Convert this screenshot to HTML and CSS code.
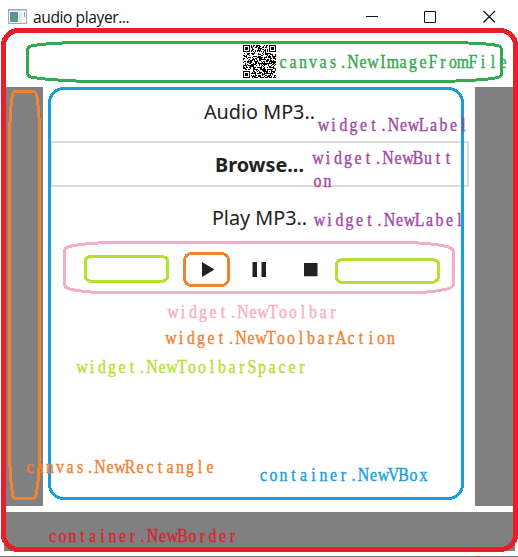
FILE: index.html
```html
<!DOCTYPE html>
<html lang="en">
<head>
<meta charset="utf-8">
<title>audio player...</title>
<link rel="stylesheet" href="styles.css">
</head>
<body>
<div class="window">
  <header class="titlebar">
    <svg class="app-icon" width="19" height="16" viewBox="0 0 19 16">
      <defs><linearGradient id="g" x2="1" y2="1"><stop offset="0" stop-color="#5e8fa8"/><stop offset="1" stop-color="#4fa77c"/></linearGradient></defs>
      <rect x=".5" y=".5" width="18" height="14" fill="#f4f6f8" stroke="#a0a8b0"/>
      <path d="M1 1.5H18" stroke="#c3d0dc"/>
      <rect x="2" y="3" width="8" height="10" fill="url(#g)"/>
      <rect x="11" y="3" width="3" height="10" fill="#e4e8ee"/>
      <path d="M16.500 3V8" stroke="#8aa0b0"/>
    </svg>
    <span class="title">audio player...</span>
    <svg class="controls" width="130" height="14" viewBox="0 0 130 14" fill="none" stroke="#111">
      <path d="M0 6.500H12M58.500 1.500H69.500V12.500H58.500Z"/>
      <path d="M117.500 1L129 12.500M129 1L117.500 12.500" stroke-width="1.200"/>
    </svg>
  </header>
  <div class="top"><svg class="qr" width="33" height="33" viewBox="0 0 33 33" shape-rendering="crispEdges"><path id="qr"/></svg></div>
  <div class="middle">
    <div class="side left"></div>
    <main class="vbox">
      <div class="label first">Audio MP3..</div>
      <div class="button">Browse...</div>
      <div class="label second">Play MP3..</div>
      <div class="toolbar">
        <svg width="117" height="16" viewBox="0 0 117 16" fill="#212121">
          <path d="M0 0L12.500 7.500L0 15ZM50.500 0H55V15H50.500ZM59.500 0H64V15H59.500ZM102 1H115.500V14.200H102Z"/>
        </svg>
      </div>
    </main>
    <div class="side right"></div>
  </div>
  <div class="bottom"></div>
  <div class="edge"></div>
</div>
<svg class="notes" width="518" height="557" viewBox="0 0 518 557">
  <g fill="none" stroke-width="3" shape-rendering="crispEdges">
    <rect x="3.500" y="30.500" width="512" height="519" rx="15" stroke="#e81e28" stroke-width="5"/>
    <path stroke="#32aa50" d="M75 42.500H453Q492 43.500 499 46Q501.500 47 501.500 50V74Q501.500 76.500 498 77.500Q485 80.500 438 81.500H89Q44 80 31 77Q27.500 76 27.500 73V50Q27.500 47 31 46Q43 43.500 75 42.500Z"/>
    <path stroke="#f08232" d="M15 91.500H33Q36 91.500 37 97Q39.500 112 39.500 138V455Q39 480 36 495Q35.500 498.500 32 498.500H16Q13 498.500 12.500 494Q9.500 475 9.500 445V138Q10 112 12 97Q12.500 91.500 15 91.500Z"/>
    <rect x="49.500" y="88.500" width="413" height="410" rx="14" stroke="#169fdc"/>
    <path stroke="#f5aec8" d="M108 242.500H411Q440 244 450 247.500Q453.500 249 453.500 252V283Q453.500 287 449 288.500Q438 291.500 420 292.500H99Q78 291.500 68 288.500Q64.500 287 64.500 284V251Q64.500 248 69 246.500Q82 243.500 108 242.500Z"/>
    <path stroke="#b5e034" d="M92 256.500H160Q167.500 256.500 167.500 261V276Q167.500 281.500 160 281.500H93Q85.500 281.500 85.500 276V261Q85.500 256.500 92 256.500ZM345 259.500H430Q438.500 259.500 438.500 264V276Q438.500 282.500 430 282.500H345Q336.500 282.500 336.500 278V264Q336.500 259.500 345 259.500Z"/>
    <rect x="184.500" y="253.500" width="44" height="32" rx="7" stroke="#f08232"/>
  </g>
  <g class="captions">
    <text class="green" data-x="278" data-y="67.500">canvas.NewImageFromFile</text>
    <text class="purple" data-x="318.500" data-y="130.500">widget.NewLabel</text>
    <text class="purple" data-x="313" data-y="163.500">widget.NewButt</text>
    <text class="purple" data-x="312.500" data-y="186.500">on</text>
    <text class="purple" data-x="314.500" data-y="225.500">widget.NewLabel</text>
    <text class="pink" data-x="168" data-y="317.500">widget.NewToolbar</text>
    <text class="orange" data-x="166" data-y="343.500">widget.NewToolbarAction</text>
    <text class="lime" data-x="77" data-y="372.500">widget.NewToolbarSpacer</text>
    <text class="orange" data-x="25" data-y="472.500">canvas.NewRectangle</text>
    <text class="blue" data-x="258.500" data-y="480.500">container.NewVBox</text>
    <text class="red" data-x="47.500" data-y="541.500">container.NewBorder</text>
  </g>
</svg>
<script src="script.js"></script>
</body>
</html>
```
FILE: styles.css
```css
body { margin: 0; background: #fff; overflow: hidden; }
.window { width: 518px; height: 557px; display: flex; flex-direction: column; font-family: "Noto Sans", sans-serif; color: #212121; }
.titlebar { height: 33px; display: flex; align-items: center; padding-left: 8px; box-sizing: border-box; flex: none; }
.title { font: 15.6px/20px "Open Sans", "Noto Sans", sans-serif; margin-left: 6px; flex: 1; color: #111; letter-spacing: -0.42px; }
.controls { margin-right: 22px; }
.top { height: 54px; flex: none; display: flex; justify-content: center; padding-top: 12px; box-sizing: border-box; padding-left: 1px; }
.qr { display: block; }
.middle { height: 419px; flex: none; display: flex; justify-content: space-between; padding: 0 4px 0 6px; }
.side { background: #808080; }
.left { width: 37px; }
.right { width: 39px; }
.vbox { width: 419px; display: flex; flex-direction: column; align-items: center; margin-left: 1px; }
.label { font-size: 19.8px; line-height: 28px; white-space: nowrap; }
.first { margin-top: 11px; height: 43px; }
.button { align-self: stretch; height: 46px; box-sizing: border-box; border: 2px solid #dcdcdc; text-align: center; font-size: 19.8px; line-height: 44px; font-weight: 700; }
.second { margin-top: 17px; }
.toolbar { margin-top: 30px; padding-left: 2px; }
.toolbar svg { display: block; }
.bottom { height: 39px; margin: 6px 3px 0 4px; background: #808080; flex: none; }
.edge { height: 1px; margin-top: 5px; background: linear-gradient(90deg, #777 476px, #a33 476px 480px, #777 480px); }
.notes { position: absolute; left: 0; top: 0; }
.captions { font: 18px "Liberation Serif", serif; text-anchor: middle; stroke-width: .4px; }
.green { fill: #32aa50; stroke: #32aa50; }
.purple { fill: #a04aa4; stroke: #a04aa4; }
.pink { fill: #f5aec8; stroke: #f5aec8; }
.orange { fill: #f08232; stroke: #f08232; }
.lime { fill: #b5e034; stroke: #b5e034; }
.blue { fill: #169fdc; stroke: #169fdc; }
.red { fill: #d8242c; stroke: #d8242c; }
```
FILE: script.js
```js
// Fixed-pitch captions: every glyph is centred in a 10px cell.
const pitch = 10, squeeze = 0.88;
document.querySelectorAll('.captions text').forEach(t => {
  const x0 = +t.dataset.x;
  t.setAttribute('transform', `translate(${x0} ${t.dataset.y}) scale(${squeeze} 1)`);
  t.setAttribute('x', [...t.textContent].map((c, i) => (i + 0.5) * pitch / squeeze).join(' '));
});

// 33-module code with three finder squares and one alignment square.
const n = 33;
let seed = 7, d = '';
const ring = (x, y, cx, cy) => Math.max(Math.abs(x - cx), Math.abs(y - cy));
for (let y = 0; y < n; y++) {
  for (let x = 0; x < n; x++) {
    seed = (seed * 1103515245 + 12345) % 2147483648;
    let on = seed / 2147483648 < 0.5;
    if (x === 6 || y === 6) on = (x + y) % 2 === 0;
    const a = ring(x, y, 26, 26);
    if (a <= 2) on = a !== 1;
    for (const [cx, cy] of [[3, 3], [29, 3], [3, 29]]) {
      const r = ring(x, y, cx, cy);
      if (r <= 4) on = r !== 2 && r !== 4;
    }
    if (on) d += `M${x} ${y}h1v1h-1z`;
  }
}
document.getElementById('qr').setAttribute('d', d);
```
